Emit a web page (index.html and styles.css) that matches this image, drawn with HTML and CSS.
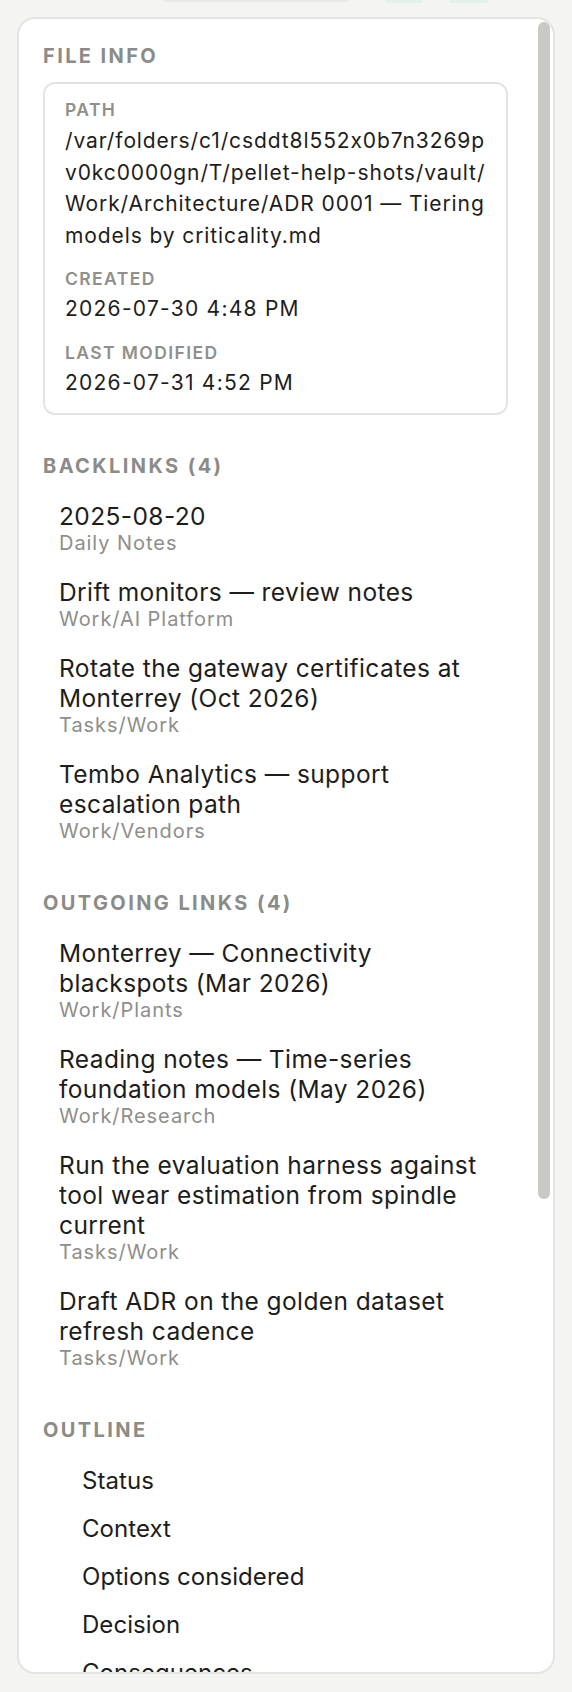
FILE: index.html
```html
<!DOCTYPE html>
<html lang="en">
<head>
<meta charset="utf-8">
<title>File info</title>
<link rel="stylesheet" href="styles.css">
</head>
<body>
<div class="topbar">
  <span class="tb-field"></span>
  <span class="tb-btn tb-btn-a"></span>
  <span class="tb-btn tb-btn-b"></span>
</div>
<aside class="panel">
  <section class="section section-info">
    <h2 class="section-title">File info</h2>
    <div class="info-box">
      <div class="info-row">
        <div class="info-label">Path</div>
        <div class="info-value path">/var/folders/c1/csddt8l552x0b7n3269pv0kc0000gn/T/pellet-help-shots/vault/Work/Architecture/ADR 0001 — Tiering models by criticality.md</div>
      </div>
      <div class="info-row">
        <div class="info-label">Created</div>
        <div class="info-value date">2026-07-30 4:48 PM</div>
      </div>
      <div class="info-row">
        <div class="info-label">Last modified</div>
        <div class="info-value date">2026-07-31 4:52 PM</div>
      </div>
    </div>
  </section>

  <section class="section">
    <h2 class="section-title">Backlinks (4)</h2>
    <ul class="link-list">
      <li class="link-item"><div class="link-title">2025-08-20</div><div class="link-folder">Daily Notes</div></li>
      <li class="link-item"><div class="link-title">Drift monitors — review notes</div><div class="link-folder">Work/AI Platform</div></li>
      <li class="link-item"><div class="link-title">Rotate the gateway certificates at Monterrey (Oct 2026)</div><div class="link-folder">Tasks/Work</div></li>
      <li class="link-item"><div class="link-title">Tembo Analytics — support escalation path</div><div class="link-folder">Work/Vendors</div></li>
    </ul>
  </section>

  <section class="section">
    <h2 class="section-title">Outgoing links (4)</h2>
    <ul class="link-list">
      <li class="link-item"><div class="link-title">Monterrey — Connectivity blackspots (Mar 2026)</div><div class="link-folder">Work/Plants</div></li>
      <li class="link-item"><div class="link-title">Reading notes — Time-series foundation models (May 2026)</div><div class="link-folder">Work/Research</div></li>
      <li class="link-item"><div class="link-title">Run the evaluation harness against tool wear estimation from spindle current</div><div class="link-folder">Tasks/Work</div></li>
      <li class="link-item"><div class="link-title">Draft ADR on the golden dataset refresh cadence</div><div class="link-folder">Tasks/Work</div></li>
    </ul>
  </section>

  <section class="section">
    <h2 class="section-title">Outline</h2>
    <ul class="outline">
      <li class="outline-item">Status</li>
      <li class="outline-item">Context</li>
      <li class="outline-item">Options considered</li>
      <li class="outline-item">Decision</li>
      <li class="outline-item">Consequences</li>
    </ul>
  </section>

  <div class="scroll-thumb"></div>
</aside>
</body>
</html>
```

FILE: styles.css
```css
* { box-sizing: border-box; }

html, body {
  margin: 0;
  padding: 0;
  background: #f4f4f2;
}

body {
  font-family: Inter, "Noto Sans", "Liberation Sans", sans-serif;
  font-feature-settings: "calt" 0;
  color: #1d1d1b;
  padding: 0 17px 18px;
}

.topbar {
  height: 17px;
  display: flex;
  align-items: flex-start;
}

.tb-field {
  display: block;
  width: 186px;
  height: 2px;
  margin-left: 146px;
  background: #e8e8e5;
  border-radius: 0 0 2px 2px;
}

.tb-btn {
  display: block;
  width: 37px;
  height: 3px;
  background: #e2f2e9;
  border-radius: 0 0 3px 3px;
}

.tb-btn-a { margin-left: 37px; }
.tb-btn-b { margin-left: 26px; width: 39px; }

.panel {
  position: relative;
  height: 1657px;
  overflow: hidden;
  background: #ffffff;
  border: 2px solid #e4e4e1;
  border-radius: 18px;
  padding: 24px 45px 0 24px;
}

.section + .section {
  margin-top: 36px;
}

.section-info {
  margin-bottom: 38px;
}

.section-info + .section {
  margin-top: 0;
}

.section-title {
  margin: 0;
  font-size: 20px;
  line-height: 26px;
  font-weight: 700;
  letter-spacing: 0.12em;
  text-transform: uppercase;
  color: #8b8b87;
}

.info-box {
  margin-top: 13px;
  border: 2px solid #e4e4e1;
  border-radius: 12px;
  padding: 15px 15px 15px 20px;
}

.info-row + .info-row {
  margin-top: 17px;
}

.info-label {
  font-size: 17.5px;
  line-height: 22px;
  font-weight: 600;
  letter-spacing: 0.08em;
  text-transform: uppercase;
  color: #8f8f8b;
}

.info-value {
  margin-top: 3px;
  font-size: 21px;
  line-height: 31.5px;
  color: #1d1d1b;
}

.info-value.date {
  letter-spacing: 1.25px;
}

.info-value.path {
  margin-top: 4px;
  letter-spacing: 0.9px;
  word-break: break-all;
}

.link-list,
.outline {
  list-style: none;
  margin: 0;
  padding: 0;
}

.link-list {
  margin-top: 11px;
}

.link-item {
  padding: 11px 16px;
}

.link-title {
  font-size: 24.5px;
  line-height: 30px;
  letter-spacing: 0.4px;
  color: #1d1d1b;
}

.link-folder {
  font-size: 20px;
  line-height: 24px;
  letter-spacing: 0.95px;
  color: #8e8e8a;
}

.outline {
  margin-top: 14px;
}

.outline-item {
  padding: 9px 16px 9px 39px;
  font-size: 24px;
  line-height: 30px;
  letter-spacing: 0.05px;
  color: #1d1d1b;
}

.scroll-thumb {
  position: absolute;
  top: 3px;
  right: 3px;
  width: 12px;
  height: 1177px;
  border-radius: 6px;
  background: #c9c9c5;
}
```
